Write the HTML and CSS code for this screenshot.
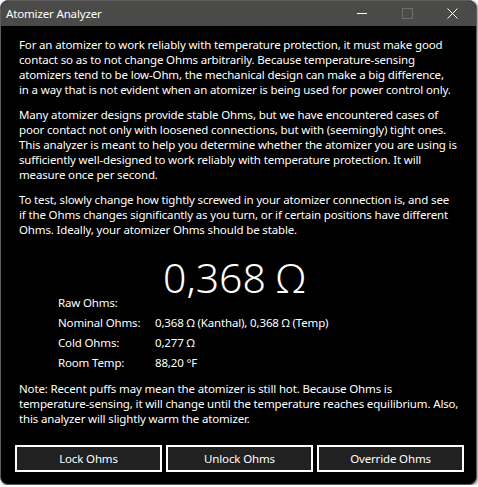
FILE: index.html
```html
<!DOCTYPE html>
<html>
<head>
    <meta charset="utf-8" />
    <title>Atomizer Analyzer</title>
    <link rel="stylesheet" href="styles.css">
</head>
<body>
    <div class="window">
        <div class="titlebar">
            <span class="title">Atomizer Analyzer</span>
            <div class="caption">
                <span class="cap-btn">
                    <svg width="11" height="11" viewBox="0 0 11 11"><path d="M0 5.5h10" stroke="#fff" stroke-width="1"/></svg>
                </span>
                <span class="cap-btn">
                    <svg width="11" height="11" viewBox="0 0 11 11"><rect x="0.5" y="0.5" width="10" height="10" fill="none" stroke="#6e6e6c" stroke-width="1"/></svg>
                </span>
                <span class="cap-btn">
                    <svg width="11" height="11" viewBox="0 0 11 11"><path d="M0.5 0.5L10.5 10.5M10.5 0.5L0.5 10.5" stroke="#fff" stroke-width="1"/></svg>
                </span>
            </div>
        </div>

        <div class="content">
            <p>For an atomizer to work reliably with temperature protection, it must make good<br>
            contact so as to not change Ohms arbitrarily. Because temperature-sensing<br>
            atomizers tend to be low-Ohm, the mechanical design can make a big difference,<br>
            in a way that is not evident when an atomizer is being used for power control only.</p>

            <p>Many atomizer designs provide stable Ohms, but we have encountered cases of<br>
            poor contact not only with loosened connections, but with (seemingly) tight ones.<br>
            This analyzer is meant to help you determine whether the atomizer you are using is<br>
            sufficiently well-designed to work reliably with temperature protection. It will<br>
            measure once per second.</p>

            <p>To test, slowly change how tightly screwed in your atomizer connection is, and see<br>
            if the Ohms changes significantly as you turn, or if certain positions have different<br>
            Ohms. Ideally, your atomizer Ohms should be stable.</p>

            <div class="readings">
                <div class="label raw">Raw Ohms:</div>
                <div class="big">0,368 &Omega;</div>
                <div class="label">Nominal Ohms:</div>
                <div class="value">0,368 &Omega; (Kanthal), 0,368 &Omega; (Temp)</div>
                <div class="label">Cold Ohms:</div>
                <div class="value">0,277 &Omega;</div>
                <div class="label">Room Temp:</div>
                <div class="value">88,20 &deg;F</div>
            </div>

            <p class="note">Note: Recent puffs may mean the atomizer is still hot. Because Ohms is<br>
            temperature-sensing, it will change until the temperature reaches equilibrium. Also,<br>
            this analyzer will slightly warm the atomizer.</p>

            <div class="buttons">
                <button class="btn">Lock Ohms</button>
                <button class="btn">Unlock Ohms</button>
                <button class="btn">Override Ohms</button>
            </div>
        </div>
    </div>
</body>
</html>
```

FILE: styles.css
```css
body {
    margin: 0;
    background: #ffffff;
    font-family: "Noto Sans", "Open Sans", sans-serif;
}

.window {
    width: 475px;
    height: 483px;
    border: 1px solid #5e5e5c;
    border-radius: 8px;
    background: #000;
    overflow: hidden;
    box-shadow: 1px 1px 3px rgba(0, 0, 0, 0.5);
}

.titlebar {
    height: 25px;
    background: #4a4a48;
    display: flex;
    align-items: center;
    justify-content: space-between;
    color: #fff;
}

.title {
    padding-left: 5px;
    font-size: 11.5px;
    letter-spacing: -0.15px;
    padding-bottom: 1px;
}

.caption {
    display: flex;
    padding-right: 1px;
}

.cap-btn {
    width: 45px;
    display: flex;
    justify-content: center;
}

.cap-btn svg {
    display: block;
}

.content {
    padding: 11px 18px 0 18px;
    color: #fff;
    font-size: 11.5px;
    letter-spacing: -0.15px;
    line-height: 15px;
}

.content p {
    margin: 0 0 10px 0;
    white-space: nowrap;
}

.readings {
    display: grid;
    grid-template-columns: 97px auto;
    padding-left: 39px;
    row-gap: 5px;
    margin-top: 23px;
}

.readings .raw {
    align-self: end;
}

/* big live reading, sits a little above its label */
.big {
    font-size: 41px;
    font-weight: 300;
    letter-spacing: 0;
    line-height: 34px;
    padding-left: 8px;
    padding-bottom: 16px;
}

.content p.note {
    margin-top: 11px;
}

.buttons {
    display: flex;
    gap: 4px;
    margin-top: 19px;
    margin-left: -4px;
}

.btn {
    flex: none;
    width: 147px;
    height: 27px;
    background: #212121;
    border: 2px solid #fff;
    color: #fff;
    font-family: inherit;
    font-size: 11.5px;
    letter-spacing: -0.15px;
    padding: 0;
}
```
